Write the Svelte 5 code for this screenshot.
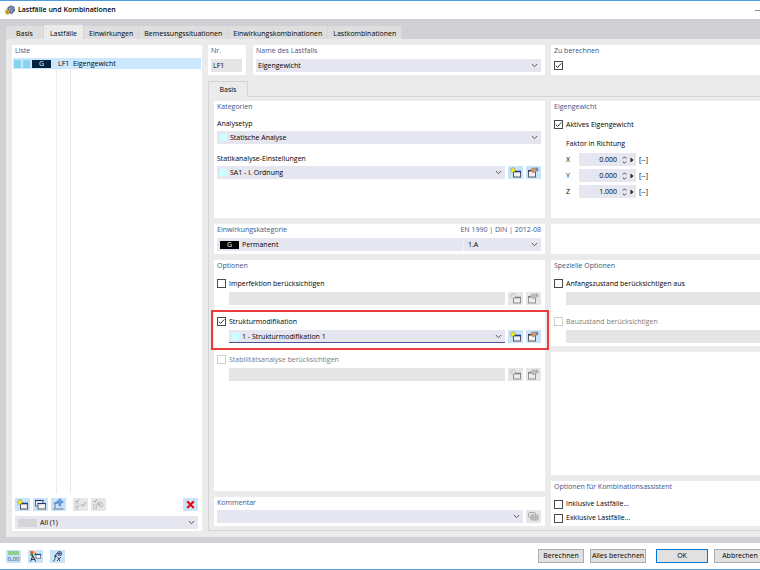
<script>
  const tabs = ['Basis', 'Lastfälle', 'Einwirkungen', 'Bemessungssituationen', 'Einwirkungskombinationen', 'Lastkombinationen'];
  let activeTab = $state('Lastfälle');

  let calculate = $state(true);
  let selfWeight = $state(true);

  let factors = $state([
    { axis: 'X', value: '0.000' },
    { axis: 'Y', value: '0.000' },
    { axis: 'Z', value: '1.000' }
  ]);

  let options = $state([
    { id: 'imperfection', label: 'Imperfektion berücksichtigen', checked: false },
    { id: 'structure', label: 'Strukturmodifikation', checked: true, value: '1 - Strukturmodifikation 1' },
    { id: 'stability', label: 'Stabilitätsanalyse berücksichtigen', checked: false, locked: true }
  ]);

  let specials = $state([
    { id: 'initial', label: 'Anfangszustand berücksichtigen aus', checked: false },
    { id: 'construction', label: 'Bauzustand berücksichtigen', checked: false, locked: true }
  ]);

  let assistant = $state([
    { label: 'Inklusive Lastfälle...', checked: false },
    { label: 'Exklusive Lastfälle...', checked: false }
  ]);

  function step(factor, delta) {
    factor.value = (Number.parseFloat(factor.value) + delta).toFixed(3);
  }
</script>

{#snippet chevron()}
  <svg class="chevron" viewBox="0 0 7 5" aria-hidden="true"><path d="M.8 1 3.5 3.7 6.2 1" /></svg>
{/snippet}

{#snippet combo(label, value, swatch, focused)}
  <div class="combo" class:focused>
    {#if swatch}<span class="swatch"></span>{/if}
    <select aria-label={label}><option>{value}</option></select>
    {@render chevron()}
  </div>
{/snippet}

{#snippet icon(name)}
  <svg class="icon" viewBox="0 0 15 13" aria-hidden="true">
    {#if name === 'new'}
      <rect x="5.5" y="5.5" width="7" height="5.5" fill="#f1f1f4" stroke="#55565d" />
      <path d="M5 5.5h8" stroke="#1f3f93" stroke-width="1.6" />
      <path d="M5 1v6.4M1.8 4.2h6.4M2.7 1.9l4.6 4.6M7.3 1.9 2.7 6.5" stroke="#8f8c3a" stroke-width=".8" />
      <circle cx="5" cy="4.2" r="1.8" fill="#f8f000" />
    {:else if name === 'edit'}
      <rect x="2.5" y="4.5" width="7" height="6.5" fill="#f3f3f3" stroke="#5b5b60" />
      <path d="M2 4.8h4" stroke="#33343a" stroke-width="1.4" />
      <path d="M4.6 3.6 6.6 2l3.4.2 1.2 1.8-1 1.7-1.7.2-.9 1-1-.2.4-1.4-2.6-.7z" fill="#d09a75" stroke="#81604b" stroke-width=".5" />
      <path d="M9.8 1.4h1.6l1.4 3-1.8.6z" fill="#4c84c7" />
    {:else if name === 'copy'}
      <rect x="2.5" y="2.5" width="7.5" height="5.5" fill="#f3f3f5" stroke="#62636c" />
      <path d="M2 2.5h8.5" stroke="#243c79" stroke-width="1.2" />
      <rect x="5" y="5.5" width="7.5" height="5.5" fill="#f3f3f5" stroke="#62636c" />
      <path d="M4.5 5.5H13" stroke="#243c79" stroke-width="1.2" />
    {:else if name === 'insert'}
      <path d="M2 11h10.5M4 10.5V5h3" fill="none" stroke="#62799f" />
      <path d="m2.6 6 1.4-1.8L5.4 6" fill="none" stroke="#62799f" stroke-width=".8" />
      <path d="M7.8 1h2v2h2v2h-2v3h-2V5h-2V3h2z" fill="#6a9bea" stroke="#4778c8" stroke-width=".5" />
    {:else if name === 'check'}
      <path d="m2.5 3 1.2 1.4L6 1.6M2.5 8.5l1.2 1.4L6 7.2m2-1 1.5 2L13 4.6" fill="none" stroke="#6c6c6c" />
      <path d="M2 5.8h4M2 11h4" stroke="#a0a0a0" stroke-width=".6" />
    {:else if name === 'uncheck'}
      <path d="m2.5 3 1.2 1.4L6 1.6" fill="none" stroke="#6c6c6c" />
      <rect x="2.3" y="7" width="3.4" height="3.4" fill="none" stroke="#999" stroke-width=".7" />
      <path d="M7 6.5c1-2.4 3.7-2.3 4.8-.2M7 3.8v2.7h2.4M12.5 7c-1 2-3.5 2.2-4.7.5" fill="none" stroke="#777" stroke-width=".8" />
    {:else if name === 'delete'}
      <path d="m4.2 3.2 6.6 6.8m0-6.8L4.2 10" fill="none" stroke="#f0060d" stroke-width="2" />
    {:else if name === 'comment'}
      <rect x="2.5" y="2.5" width="7" height="5" rx="1" fill="#ddd" stroke="#888" />
      <rect x="5" y="5" width="7" height="5" rx="1" fill="#b9b9b9" stroke="#808080" />
      <path d="M6.4 6.5h1.4v2H6.4zm2.7 0h1.3v2H9.1z" fill="#757575" />
    {:else if name === 'colors'}
      <rect x="2.4" y="1.2" width="2.6" height="2.6" fill="#e53b2d" />
      <rect x="5" y="1.2" width="2.2" height="2.6" fill="#efc536" />
      <rect x="2.4" y="3.8" width="2.6" height="2" fill="#249448" />
      <path d="M2.6 11.4 4.8 5.5l2.8 5.9M3.5 9.4h3.4M6.6 5l1.4-2" fill="none" stroke="#272c34" />
      <rect x="8" y="4.5" width="4.7" height="3.7" fill="#fff" stroke="#5a6476" stroke-width=".8" />
      <path d="M7.6 4.5h5.5" stroke="#253e7e" stroke-width="1.2" />
    {:else if name === 'function'}
      <path d="M3 11c1.3.3 1.5-.7 1.9-2.3l.9-3.7c.3-1.3.8-2 2-1.8M4 6.2h3M7 11l4-4M7.6 7l2.3 4" fill="none" stroke="#30384a" stroke-width=".9" />
      <path d="M7 3.4h5M8.4 1.6h2.4l1 2.4-1 1.5H8.5l-1-1.5z" fill="#879cc7" stroke="#35466f" stroke-width=".7" />
    {/if}
  </svg>
{/snippet}

{#snippet tool(name, label, disabled)}
  <button class="tool" type="button" aria-label={label} {disabled}>{@render icon(name)}</button>
{/snippet}

<div class="dialog">
  <header class="titlebar">
    <svg class="logo" viewBox="0 0 11 11" aria-hidden="true">
      <path d="M3 3 6.5.8 10 2.4l.4 3.8-3 3.5L3.8 8z" fill="#566f9f" stroke="#2b3b5e" stroke-width=".7" />
      <path d="M4.5 3.2 8 5.2M6 1.8 9.6 4M7.8 5l-.6 3.6M4.6 3.5l.6 3.8" stroke="#c8d4eb" stroke-width=".7" />
      <path d="M.8 5.6 3.4 5l1.4 2.2-1 3L1.4 10 .5 7.6z" fill="#e5bd31" stroke="#8f752a" stroke-width=".5" />
      <circle cx="2.7" cy="7.7" r=".9" fill="#6a5f3d" />
    </svg>
    <h1>Lastfälle und Kombinationen</h1>
    <button type="button" class="minimize" aria-label="Minimieren"></button>
  </header>

  <div class="workspace">
    <nav class="tabs">
      {#each tabs as tab (tab)}
        <button type="button" class="tab" class:active={tab === activeTab} onclick={() => (activeTab = tab)}>{tab}</button>
      {/each}
    </nav>

    <main class="content">
      <aside class="panel list">
        <h2>Liste</h2>
        <div class="list__body">
          <button type="button" class="list__row">
            <span class="list__marks">
              <i></i><i></i><b class="badge badge--navy">G</b>
            </span>
            <span class="list__no">LF1</span>
            <span>Eigengewicht</span>
          </button>
        </div>
        <div class="list__tools">
          <div class="group">
            {@render tool('new', 'Neu', false)}
            {@render tool('copy', 'Kopieren', false)}
            {@render tool('insert', 'Einfügen', false)}
          </div>
          <div class="group">
            {@render tool('check', 'Alle auswählen', true)}
            {@render tool('uncheck', 'Auswahl umkehren', true)}
          </div>
          <div class="group group--end">
            {@render tool('delete', 'Löschen', false)}
          </div>
        </div>
        <div class="combo list__filter">
          <span class="swatch swatch--wide"></span>
          <select aria-label="Filter"><option>All (1)</option></select>
          {@render chevron()}
        </div>
      </aside>

      <section class="details">
        <div class="head">
          <div class="head__main">
            <div class="panel">
              <h2><label for="case-no">Nr.</label></h2>
              <input id="case-no" class="readonly" value="LF1" readonly />
            </div>
            <div class="panel">
              <h2>Name des Lastfalls</h2>
              {@render combo('Name des Lastfalls', 'Eigengewicht', false, false)}
            </div>
          </div>
          <div class="panel panel--edge">
            <h2>Zu berechnen</h2>
            <input class="calculate" type="checkbox" aria-label="Zu berechnen" bind:checked={calculate} />
          </div>
        </div>

        <button type="button" class="subtab">Basis</button>

        <div class="pane">
          <div class="column">
            <div class="panel categories">
              <h2>Kategorien</h2>
              <div class="caption">Analysetyp</div>
              {@render combo('Analysetyp', 'Statische Analyse', true, false)}
              <div class="caption caption--next">Statikanalyse-Einstellungen</div>
              <div class="line">
                {@render combo('Statikanalyse-Einstellungen', 'SA1 - I. Ordnung', true, false)}
                {@render tool('new', 'Neu', false)}
                {@render tool('edit', 'Bearbeiten', false)}
              </div>
            </div>

            <div class="panel action">
              <div class="action__head">
                <h2>Einwirkungskategorie</h2>
                <h2>EN 1990 | DIN | 2012-08</h2>
              </div>
              <div class="combo">
                <b class="badge">G</b>
                <select aria-label="Einwirkungskategorie"><option>Permanent</option></select>
                <span class="action__code">1.A</span>
                {@render chevron()}
              </div>
            </div>

            <div class="panel grow">
              <h2 class="spaced">Optionen</h2>
              {#each options as option (option.id)}
                <div class="option" class:highlighted={option.id === 'structure'}>
                  <label class="check">
                    <input type="checkbox" bind:checked={option.checked} disabled={option.locked} />
                    {option.label}
                  </label>
                  <div class="line indent">
                    {#if option.value}
                      {@render combo(option.label, option.value, true, true)}
                    {:else}
                      <select class="blank" aria-label={option.label} disabled></select>
                    {/if}
                    {@render tool('new', 'Neu', !option.value)}
                    {@render tool('edit', 'Bearbeiten', !option.value)}
                  </div>
                </div>
              {/each}
            </div>

            <div class="panel comment">
              <h2>Kommentar</h2>
              <div class="line">
                {@render combo('Kommentar', '', false, false)}
                {@render tool('comment', 'Kommentare', true)}
              </div>
            </div>
          </div>

          <div class="column">
            <div class="panel panel--edge categories">
              <h2>Eigengewicht</h2>
              <label class="check check--first">
                <input type="checkbox" bind:checked={selfWeight} />
                Aktives Eigengewicht
              </label>
              <div class="factors">
                <div class="factors__title">Faktor in Richtung</div>
                {#each factors as factor (factor.axis)}
                  <div class="factor">
                    <label for={`factor-${factor.axis}`}>{factor.axis}</label>
                    <div class="spin">
                      <input id={`factor-${factor.axis}`} bind:value={factor.value} />
                      <span class="spin__steps">
                        <button type="button" aria-label="Erhöhen" onclick={() => step(factor, 0.1)}>
                          <svg viewBox="0 0 5 3" aria-hidden="true"><path d="M.8 2.5 2.5.8l1.7 1.7" /></svg>
                        </button>
                        <button type="button" aria-label="Verringern" onclick={() => step(factor, -0.1)}>
                          <svg viewBox="0 0 5 3" aria-hidden="true"><path d="m.8.5 1.7 1.7L4.2.5" /></svg>
                        </button>
                      </span>
                      <button type="button" class="spin__more" aria-label="Mehr">
                        <svg viewBox="0 0 4 6" aria-hidden="true"><path d="M.5.5v5L3.5 3z" /></svg>
                      </button>
                    </div>
                    <span>[--]</span>
                  </div>
                {/each}
              </div>
            </div>

            <div class="panel panel--edge action"></div>

            <div class="panel panel--edge special">
              <h2 class="spaced">Spezielle Optionen</h2>
              {#each specials as option (option.id)}
                <div class="option">
                  <label class="check">
                    <input type="checkbox" bind:checked={option.checked} disabled={option.locked} />
                    {option.label}
                  </label>
                  <div class="line indent">
                    <select class="blank" aria-label={option.label} disabled></select>
                  </div>
                </div>
              {/each}
            </div>

            <div class="panel panel--edge grow"></div>

            <div class="panel panel--edge assistant">
              <h2>Optionen für Kombinationsassistent</h2>
              {#each assistant as option (option.label)}
                <label class="check check--tight">
                  <input type="checkbox" bind:checked={option.checked} />
                  {option.label}
                </label>
              {/each}
            </div>
          </div>
        </div>
      </section>
    </main>
  </div>

  <footer class="footer">
    <div class="footer__tools">
      <button class="tool tool--units" type="button" aria-label="Einheiten"><span>0,00</span></button>
      {@render tool('colors', 'Anzeige', false)}
      {@render tool('function', 'Formeln', false)}
    </div>
    <div class="footer__actions">
      <button type="button">Berechnen</button>
      <button type="button" class="wide">Alles berechnen</button>
      <button type="button" class="primary">OK</button>
      <button type="button" class="cancel">Abbrechen</button>
    </div>
  </footer>
</div>

<style>
  :global(body) {
    margin: 0;
  }

  .dialog,
  .dialog * {
    box-sizing: border-box;
  }

  .dialog {
    --field: #e6e6f1;
    --off: #e5e5e5;
    --tool: #c9e4f8;
    --heading: #3d5588;
    display: flex;
    flex-direction: column;
    min-height: 100vh;
    overflow: hidden;
    border-top: 1px solid #4f9fe0;
    border-bottom: 1px solid #4f9fe0;
    background: #fff;
    color: #000;
    font: 500 7px/12px 'Open Sans', 'Noto Sans', sans-serif;
  }

  button,
  input,
  select {
    margin: 0;
    padding: 0;
    border: 0;
    border-radius: 0;
    background: none;
    color: inherit;
    font: inherit;
  }

  select {
    appearance: none;
    opacity: 1;
  }

  h1,
  h2 {
    margin: 0;
    font: inherit;
  }

  h2 {
    color: var(--heading);
    line-height: 12px;
    white-space: nowrap;
  }

  .spaced {
    margin-bottom: 3px;
  }

  .titlebar {
    display: flex;
    align-items: center;
    gap: 3px;
    height: 18px;
    padding-left: 5px;
  }

  .titlebar h1 {
    font-weight: 600;
  }

  .minimize {
    width: 5px;
    height: 1px;
    margin-left: auto;
    background: #888;
  }

  .logo {
    width: 10px;
    height: 10px;
  }

  .workspace {
    display: flex;
    flex: 1;
    flex-direction: column;
    padding: 6px 0 6px 6px;
    background: #d0d0d5;
  }

  .tabs {
    display: flex;
    align-items: flex-end;
    height: 14px;
  }

  .tab {
    min-width: 38px;
    height: 13px;
    padding: 2px 5px 0;
    border-right: 1px solid #d5d5d7;
    background: #dedede;
    line-height: 11px;
    white-space: nowrap;
  }

  .tab.active {
    min-width: 40px;
    height: 14px;
    background: #ebebeb;
  }

  .content {
    display: grid;
    flex: 1;
    grid-template-columns: 190px minmax(0, 1fr);
    gap: 6px;
    padding: 6px 0 6px 6px;
    background: #ebebeb;
  }

  .panel {
    padding: 0 4px 3px 3px;
    background: #fff;
  }

  .panel--edge {
    padding-right: 0;
  }

  .list {
    display: flex;
    flex-direction: column;
    padding-bottom: 2px;
  }

  .list__body {
    flex: 1;
    margin-top: 1px;
    margin-right: -3px;
    margin-left: -2px;
    background:
      linear-gradient(#ececec, #ececec) 43px 0 / 1px 100% no-repeat,
      linear-gradient(#ececec, #ececec) 57px 0 / 1px 100% no-repeat;
  }

  .list__row {
    display: flex;
    align-items: center;
    width: 100%;
    height: 11px;
    padding-left: 1px;
    background: #cce8ff;
    line-height: 11px;
    text-align: left;
  }

  .list__marks {
    display: flex;
    gap: 2px;
    align-items: center;
    width: 44px;
  }

  .list__marks i {
    width: 7px;
    height: 8px;
    background: #87d3f4;
  }

  .list__no {
    width: 15px;
  }

  .badge {
    width: 19px;
    height: 8px;
    background: #000;
    color: #fff;
    font-weight: 400;
    line-height: 8px;
    text-align: center;
  }

  .badge--navy {
    background: #00233f;
  }

  .list__tools {
    display: flex;
    gap: 7px;
    margin-top: 4px;
    margin-bottom: 5px;
  }

  .group {
    display: flex;
    gap: 3px;
  }

  .group--end {
    margin-left: auto;
  }

  .tool {
    display: flex;
    flex: none;
    align-items: center;
    justify-content: center;
    width: 15px;
    height: 13px;
    background: var(--tool);
  }

  .tool:disabled {
    background: #e6e6e6;
  }

  .tool:disabled .icon {
    filter: grayscale(1);
    opacity: 0.6;
  }

  .icon {
    width: 15px;
    height: 13px;
    fill: none;
  }

  .combo {
    display: flex;
    flex: 1;
    align-items: center;
    gap: 3px;
    min-width: 0;
    height: 13px;
    padding: 0 3px 0 2px;
    background: var(--field);
  }

  .combo:has(.swatch, .badge) {
    padding-left: 3px;
  }

  .combo select {
    flex: 1;
    min-width: 0;
    height: 12px;
  }

  .combo.focused {
    box-shadow: inset 0 -1px #4f50a0;
  }

  .list__filter {
    flex: none;
  }

  .chevron {
    flex: none;
    width: 7px;
    height: 5px;
    fill: none;
    stroke: #555;
  }

  .swatch {
    width: 7px;
    height: 7px;
    background: #ccffff;
  }

  .swatch--wide {
    width: 19px;
    height: 8px;
    background: #d5d5d5;
  }

  .details {
    display: flex;
    flex-direction: column;
    min-width: 0;
  }

  .head {
    display: grid;
    grid-template-columns: minmax(0, 337fr) minmax(0, 209fr);
    gap: 6px;
    margin-bottom: 6px;
  }

  .head .panel {
    height: 30px;
  }

  .head h2 {
    margin-bottom: 2px;
  }

  .head__main {
    display: grid;
    grid-template-columns: 38px minmax(0, 1fr);
    gap: 7px;
  }

  .readonly {
    display: block;
    width: 100%;
    height: 13px;
    padding: 0 2px;
    background: var(--off);
  }

  .subtab {
    position: relative;
    align-self: flex-start;
    width: 40px;
    height: 16px;
    margin-bottom: -1px;
    border: 1px solid #d3d3d8;
    border-bottom: 0;
    background: #ebebeb;
  }

  .pane {
    display: grid;
    flex: 1;
    grid-template-columns: minmax(0, 331fr) minmax(0, 209fr);
    gap: 6px;
    padding: 4px 0 4px 5px;
    border: 1px solid #d3d3d8;
    border-right: 0;
  }

  .column {
    display: flex;
    flex-direction: column;
    gap: 6px;
  }

  .grow {
    flex: 1;
  }

  .categories {
    height: 117px;
  }

  .caption {
    height: 14px;
    margin-top: 4px;
    line-height: 14px;
  }

  .caption--next {
    margin-top: 8px;
  }

  .line {
    display: flex;
    gap: 3px;
  }

  .indent {
    padding-left: 12px;
  }

  .action {
    height: 30px;
  }

  .action__head {
    display: flex;
    justify-content: space-between;
    margin-bottom: 2px;
  }

  .action__code {
    width: 65px;
    padding-left: 4px;
    border-left: 1px solid #f1f1f6;
  }

  .comment h2 {
    margin-bottom: 1px;
  }

  .check {
    display: flex;
    gap: 3px;
    align-items: center;
    height: 17px;
    white-space: nowrap;
  }

  .check--first {
    margin-top: 3px;
  }

  .check--tight {
    height: 14px;
  }

  .check:has(:disabled) {
    color: #7c7c7c;
  }

  input[type='checkbox'] {
    flex: none;
    width: 9px;
    height: 9px;
    appearance: none;
    border: 1px solid #4a4a4a;
    background: #fff;
  }

  input[type='checkbox']:checked {
    background: #fff url("data:image/svg+xml,%3Csvg xmlns='http://www.w3.org/2000/svg' viewBox='0 0 7 7'%3E%3Cpath d='M.8 3.6 2.7 5.4 6.3 1.4' fill='none' stroke='%23333'/%3E%3C/svg%3E");
  }

  input[type='checkbox']:disabled {
    border-color: #cfcfcf;
  }

  .calculate {
    display: block;
    margin-top: 4px;
  }

  .option {
    position: relative;
    margin-bottom: 8px;
  }

  .highlighted::after {
    position: absolute;
    inset: -3px -8px -7px -6px;
    border: 2px solid #e93c3c;
    content: '';
    pointer-events: none;
    z-index: 1;
  }

  .blank {
    flex: 1;
    min-width: 0;
    height: 13px;
    background: var(--off);
  }

  .special {
    height: 86px;
  }

  .assistant {
    height: 45px;
  }

  .assistant h2 {
    margin-bottom: 4px;
  }

  .factors {
    display: flex;
    flex-direction: column;
    gap: 3px;
    margin-top: 5px;
    padding-left: 12px;
  }

  .factor {
    display: grid;
    grid-template-columns: 13px 57px auto;
    align-items: center;
  }

  .factor > span {
    padding-left: 3px;
  }

  .spin {
    display: flex;
    gap: 3px;
    align-items: center;
    height: 13px;
    padding-right: 2px;
    background: var(--field);
  }

  .spin input {
    flex: 1;
    min-width: 0;
    text-align: right;
  }

  .spin__steps {
    display: flex;
    flex-direction: column;
    gap: 2px;
    padding-left: 2px;
  }

  .spin button {
    display: flex;
  }

  .spin__steps svg {
    width: 5px;
    height: 3px;
    fill: none;
    stroke: #444;
  }

  .spin__more svg {
    width: 4px;
    height: 6px;
    fill: #222;
  }

  .footer {
    display: flex;
    align-items: center;
    justify-content: space-between;
    height: 26px;
    padding-left: 6px;
  }

  .footer__tools {
    display: flex;
    gap: 7px;
  }

  .tool--units {
    align-items: flex-end;
    background: linear-gradient(#8fd08f, #8fd08f) 2px 1px / 11px 4px no-repeat var(--tool);
    color: #263b63;
    font-size: 6px;
    line-height: 8px;
  }

  .footer__actions {
    display: flex;
    gap: 6px;
    margin-right: -6px;
  }

  .footer__actions button {
    width: 46px;
    height: 14px;
    border: 1px solid #adadad;
    background: #e1e1e1;
    line-height: 12px;
    white-space: nowrap;
  }

  .footer__actions .wide {
    width: 56px;
  }

  .footer__actions .primary {
    width: 52px;
    margin-left: 4px;
    border: 1px solid #0078d7;
  }

  .footer__actions .cancel {
    width: 52px;
  }
</style>
